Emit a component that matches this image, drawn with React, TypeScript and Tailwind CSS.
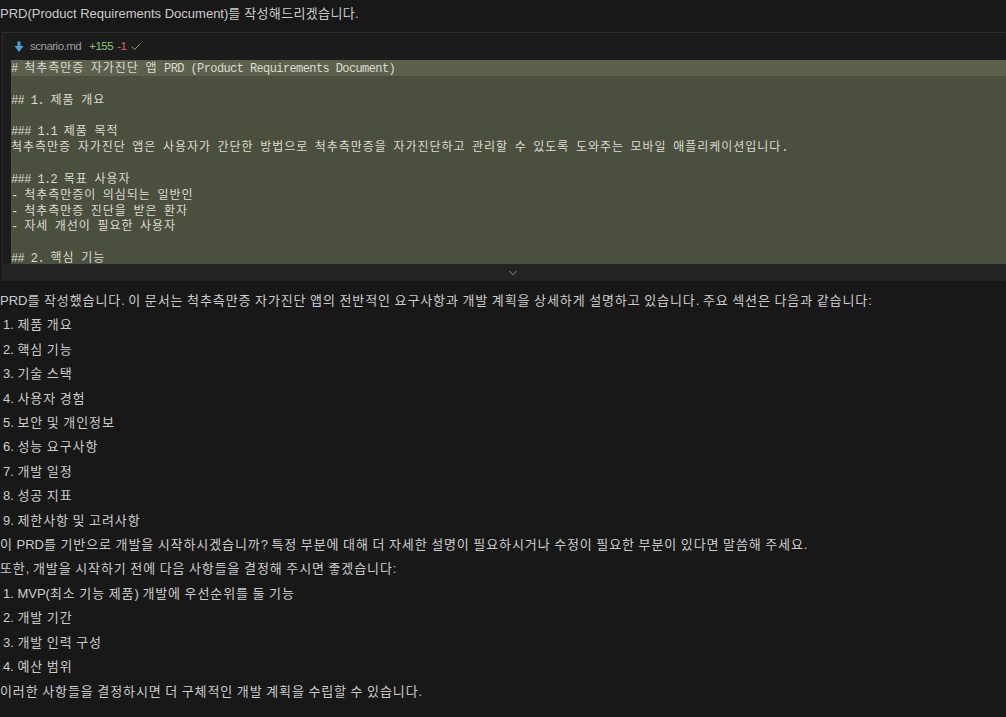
import { ChevronDown, Check } from "lucide-react";

const codeLines = [
  "# 척추측만증 자가진단 앱 PRD (Product Requirements Document)",
  "",
  "## 1. 제품 개요",
  "",
  "### 1.1 제품 목적",
  "척추측만증 자가진단 앱은 사용자가 간단한 방법으로 척추측만증을 자가진단하고 관리할 수 있도록 도와주는 모바일 애플리케이션입니다.",
  "",
  "### 1.2 목표 사용자",
  "- 척추측만증이 의심되는 일반인",
  "- 척추측만증 진단을 받은 환자",
  "- 자세 개선이 필요한 사용자",
  "",
  "## 2. 핵심 기능",
  "",
];

const sections = [
  "제품 개요",
  "핵심 기능",
  "기술 스택",
  "사용자 경험",
  "보안 및 개인정보",
  "성능 요구사항",
  "개발 일정",
  "성공 지표",
  "제한사항 및 고려사항",
];

const decisions = [
  "MVP(최소 기능 제품) 개발에 우선순위를 둘 기능",
  "개발 기간",
  "개발 인력 구성",
  "예산 범위",
];

// hangul glyphs render a bit narrower than in the original, so widen those runs
const split = (text: string) => text.split(/([\uAC00-\uD7A3]+)/).filter(Boolean);
const isHangul = (s: string) => /[\uAC00-\uD7A3]/.test(s);

const Txt = ({ text, tight }: { text: string; tight?: boolean }) => (
  <>
    {split(text).map((part, i) =>
      isHangul(part) ? (
        <span key={i} className={tight ? "tracking-[0.35px]" : "tracking-[0.9px]"}>{part}</span>
      ) : (
        <span key={i}>{part}</span>
      )
    )}
  </>
);

const Code = ({ text }: { text: string }) => (
  <>
    {split(text).map((part, i) =>
      isHangul(part) ? (
        <span key={i} className="tracking-[0.96px]">{part}</span>
      ) : (
        <span key={i} className="tracking-[-0.6px]">{part}</span>
      )
    )}
  </>
);

const FileIcon = () => (
  <svg width="10" height="12" viewBox="0 0 10 12" className="shrink-0">
    <rect x="3.5" y="0.5" width="3" height="5" fill="#4a9fd8" />
    <path d="M0.5 5 L9.5 5 L5 11 Z" fill="#4a9fd8" />
  </svg>
);

const App = () => {
  return (
    <div className="w-[1006px] h-[717px] overflow-hidden bg-[#181818] text-[#cccccc] text-[13px] font-['Liberation_Sans','Noto_Sans_CJK_KR',sans-serif]">
      <p className="leading-[26px] pt-[1px]">
        <Txt text="PRD(Product Requirements Document)를 작성해드리겠습니다." tight />
      </p>

      <div className="mt-[5px] ml-[2px] w-[1021px] border-t border-l border-[#2c2c2c] bg-[#1c1c1c]">
        <div className="h-[27px] flex items-center pl-[11px] gap-[4px] text-[11.5px] tracking-[-0.5px]">
          <FileIcon />
          <span className="text-[#9d9d9d] ml-[2px]">scnario.md</span>
          <span className="text-[#8fc47a] ml-[4px]">+155</span>
          <span className="text-[#e0606a]">-1</span>
          <Check className="h-3 w-3 text-[#6fb56a]" strokeWidth={2} />
        </div>

        <div className="ml-[8px] h-[204px] overflow-hidden bg-[#4b4f3e] text-[#dcdcd0] text-[12px] font-['Liberation_Mono','Noto_Sans_CJK_KR',monospace] leading-[15.85px]">
          {codeLines.map((line, i) => (
            <div key={i} className={i === 0 ? "bg-[#5c604c] whitespace-pre h-[15.85px]" : "whitespace-pre h-[15.85px]"}>
              <div className="translate-y-[2px]">
                <Code text={line} />
              </div>
            </div>
          ))}
        </div>

        <div className="h-[17px] bg-[#232323] flex justify-center items-center">
          <ChevronDown className="h-[14px] w-[14px] text-[#9a9a9a]" strokeWidth={1.5} />
        </div>
      </div>

      <div className="mt-[8px] leading-[24.4px]">
        <p>
          <Txt text="PRD를 작성했습니다. 이 문서는 척추측만증 자가진단 앱의 전반적인 요구사항과 개발 계획을 상세하게 설명하고 있습니다. 주요 섹션은 다음과 같습니다:" />
        </p>
        <ol className="pl-[3px]">
          {sections.map((s, i) => (
            <li key={i}>
              <Txt text={`${i + 1}. ${s}`} />
            </li>
          ))}
        </ol>
        <p>
          <Txt text="이 PRD를 기반으로 개발을 시작하시겠습니까? 특정 부분에 대해 더 자세한 설명이 필요하시거나 수정이 필요한 부분이 있다면 말씀해 주세요." />
        </p>
        <p>
          <Txt text="또한, 개발을 시작하기 전에 다음 사항들을 결정해 주시면 좋겠습니다:" />
        </p>
        <ol className="pl-[3px]">
          {decisions.map((s, i) => (
            <li key={i}>
              <Txt text={`${i + 1}. ${s}`} />
            </li>
          ))}
        </ol>
        <p>
          <Txt text="이러한 사항들을 결정하시면 더 구체적인 개발 계획을 수립할 수 있습니다." />
        </p>
      </div>
    </div>
  );
};

export default App;
